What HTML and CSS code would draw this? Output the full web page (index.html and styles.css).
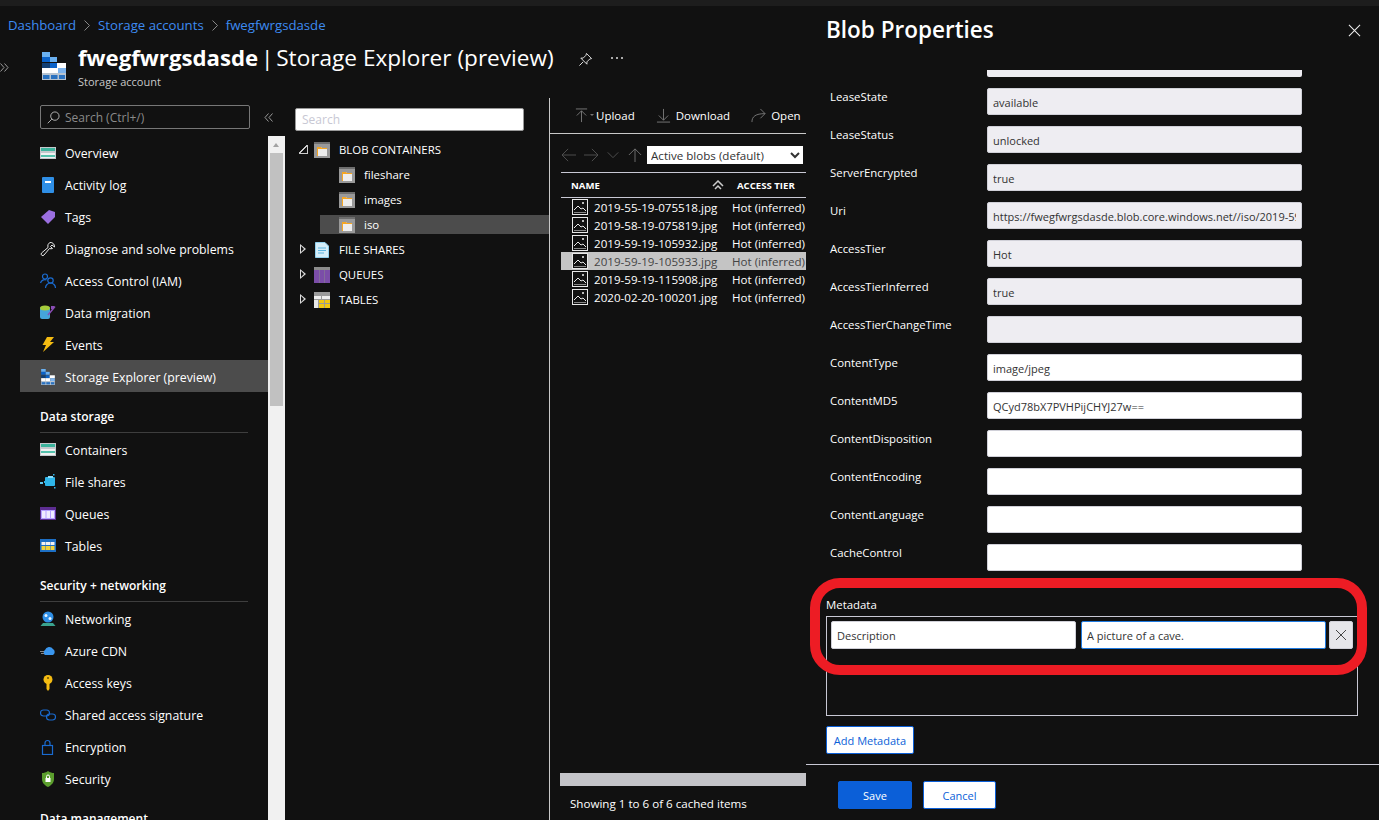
FILE: index.html
```html
<!DOCTYPE HTML>
<html>
<head>
   <meta charset="utf-8">
   <title>Storage Explorer (preview)</title>
   <link rel="stylesheet" href="styles.css">
</head>
<body>

<svg class="defs" width="0" height="0">
   <symbol id="i-logo" viewBox="0 0 24 28">
      <rect x="0" y="0" width="8" height="5" fill="#6ab0f0"/>
      <rect x="0" y="5" width="8" height="5" fill="#0a62c9"/>
      <rect x="8" y="5" width="7" height="5" fill="#6ab0f0"/>
      <rect x="0" y="11" width="8" height="5" fill="#123f73"/>
      <rect x="8" y="11" width="7" height="5" fill="#0a62c9"/>
      <rect x="15" y="11" width="9" height="5" fill="#fff"/>
      <rect x="0" y="16" width="8" height="5" fill="#fff"/>
      <rect x="8" y="16" width="8" height="5" fill="#fff"/>
      <rect x="16" y="16" width="8" height="5" fill="#7db4ee"/>
      <rect x="0" y="21" width="24" height="7" fill="#b8c4d0"/>
      <rect x="1" y="23" width="6.500" height="4" fill="#2a72c0"/>
      <rect x="9" y="23" width="6.500" height="4" fill="#2a72c0"/>
      <rect x="17" y="23" width="6" height="4" fill="#2a72c0"/>
   </symbol>
   <symbol id="i-overview" viewBox="0 0 16 16">
      <rect x="0" y="2" width="16" height="12" fill="#c4c8cc"/>
      <rect x="1" y="3" width="14" height="3" fill="#3bb39c"/>
      <rect x="1" y="8" width="14" height="5" fill="#f0f0f0"/>
      <rect x="1" y="10" width="14" height="2" fill="#54c1ac"/>
   </symbol>
   <symbol id="i-log" viewBox="0 0 16 16">
      <rect x="2" y="0" width="12" height="16" rx="1" fill="#2f8fe6"/>
      <rect x="5" y="4" width="6" height="2" fill="#fff"/>
   </symbol>
   <symbol id="i-tag" viewBox="0 0 16 16">
      <path d="M1 8 L9 1 L15 3 L15 8 L8 15 Z" fill="#9b6fe0"/>
   </symbol>
   <symbol id="i-wrench" viewBox="0 0 16 16">
      <path d="M10 1.500 a4 4 0 0 1 4.500 4.500 L12 4 L10.500 5.500 L12.500 7.500 a4 4 0 0 1 -3 0 L4 14 a1.500 1.500 0 0 1 -2.500 -2 L8 6.500 a4 4 0 0 1 2 -5 Z" fill="none" stroke="#e8e8e8" stroke-width="1"/>
   </symbol>
   <symbol id="i-iam" viewBox="0 0 16 16">
      <circle cx="5" cy="3.500" r="2.500" fill="none" stroke="#1a6bd0" stroke-width="1.200"/>
      <path d="M0.500 10 a4.500 4.500 0 0 1 6 -3" fill="none" stroke="#1a6bd0" stroke-width="1.200"/>
      <circle cx="10.500" cy="7.500" r="2.700" fill="none" stroke="#1a6bd0" stroke-width="1.200"/>
      <path d="M5.500 15 a5 5 0 0 1 10 0" fill="none" stroke="#1a6bd0" stroke-width="1.200"/>
   </symbol>
   <symbol id="i-migration" viewBox="0 0 16 16">
      <rect x="0" y="2" width="10" height="12" rx="2" fill="#45a5dc"/>
      <ellipse cx="5" cy="3" rx="5" ry="2.500" fill="#a5cc3c"/>
      <path d="M8 10 L15 1.500" stroke="#8a4db5" stroke-width="1.500"/>
      <rect x="11" y="1" width="3" height="3" fill="#8a4db5"/>
   </symbol>
   <symbol id="i-events" viewBox="0 0 16 16">
      <path d="M7 0 L14 0 L10 5 L14 5 L3 15 L6 8 L2.500 8 Z" fill="#f5bc12"/>
   </symbol>
   <symbol id="i-containers" viewBox="0 0 16 16">
      <rect x="0" y="1" width="16" height="13" fill="#c4c8cc"/>
      <rect x="1" y="2" width="14" height="3" fill="#3bb39c"/>
      <rect x="1" y="7" width="14" height="6" fill="#f0f0f0"/>
      <rect x="1" y="9" width="14" height="2" fill="#54c1ac"/>
   </symbol>
   <symbol id="i-shares" viewBox="0 0 16 16">
      <rect x="5" y="3" width="10" height="9" rx="1" fill="#2fb6ea"/>
      <rect x="8" y="2" width="5" height="2" fill="#8fdcf8"/>
      <rect x="0" y="8" width="3" height="2" fill="#60c8f0"/>
      <rect x="4" y="7" width="2" height="2" fill="#2fb6ea"/>
      <rect x="13" y="0" width="1.500" height="1.500" fill="#2fb6ea"/>
      <rect x="14" y="13" width="1.500" height="1.500" fill="#2fb6ea"/>
   </symbol>
   <symbol id="i-queues" viewBox="0 0 16 16">
      <rect x="0" y="1" width="16" height="13" fill="#5c2d91"/>
      <rect x="1" y="4" width="14" height="9" fill="#b4a0ff"/>
      <rect x="2" y="5" width="3.500" height="7" fill="#efeaff"/>
      <rect x="6.500" y="5" width="3.500" height="7" fill="#efeaff"/>
      <rect x="11" y="5" width="3" height="7" fill="#efeaff"/>
   </symbol>
   <symbol id="i-tables" viewBox="0 0 16 16">
      <rect x="0" y="1" width="16" height="13" fill="#1d6fc4"/>
      <rect x="1.500" y="4" width="4" height="3" fill="#f2f2f2"/>
      <rect x="6" y="4" width="4" height="3" fill="#f2f2f2"/>
      <rect x="10.500" y="4" width="4" height="3" fill="#f2f2f2"/>
      <rect x="1.500" y="8" width="4" height="4" fill="#f2d33a"/>
      <rect x="6" y="8" width="4" height="4" fill="#f2d33a"/>
      <rect x="10.500" y="8" width="4" height="4" fill="#f2d33a"/>
   </symbol>
   <symbol id="i-network" viewBox="0 0 16 16">
      <circle cx="8" cy="6" r="5.500" fill="#2f8fe6"/>
      <circle cx="6" cy="4.500" r="1.500" fill="#e8f4ff"/>
      <circle cx="10" cy="7.500" r="1.500" fill="#e8f4ff"/>
      <path d="M0.500 15 L3 12 L13 12 L15.500 15 Z" fill="#3aa38e"/>
   </symbol>
   <symbol id="i-cdn" viewBox="0 0 16 16">
      <path d="M5 12 a3 3 0 0 1 0 -5 a4.500 4.500 0 0 1 8 -1 a3.500 3.500 0 0 1 0 6 Z" fill="#3a96ee"/>
      <rect x="0" y="8" width="4" height="1" fill="#888"/>
      <rect x="1" y="10" width="3" height="1" fill="#888"/>
   </symbol>
   <symbol id="i-key" viewBox="0 0 16 16">
      <circle cx="8" cy="4.500" r="4.500" fill="#f5bc12"/>
      <circle cx="8" cy="3" r="1" fill="#6b5208"/>
      <path d="M6.500 8 L9.500 8 L9.500 14 L8 16 L6.500 14 Z" fill="#f5bc12"/>
   </symbol>
   <symbol id="i-sas" viewBox="0 0 16 16">
      <rect x="0.500" y="3" width="9" height="6" rx="3" fill="none" stroke="#1a6bd0" stroke-width="1.100"/>
      <rect x="6.500" y="7" width="9" height="6" rx="3" fill="none" stroke="#1a6bd0" stroke-width="1.100"/>
   </symbol>
   <symbol id="i-lock" viewBox="0 0 16 16">
      <rect x="2.500" y="6.500" width="10" height="9" fill="none" stroke="#1a6bd0" stroke-width="1.200"/>
      <path d="M5 6.500 V4 a2.500 2.500 0 0 1 5 0 V6.500" fill="none" stroke="#1a6bd0" stroke-width="1.200"/>
   </symbol>
   <symbol id="i-shield" viewBox="0 0 16 16">
      <path d="M8 0 C10 1.500 12 2 14 2 V8 C14 12 11 14.500 8 16 C5 14.500 2 12 2 8 V2 C4 2 6 1.500 8 0 Z" fill="#5b9e2d"/>
      <rect x="5.500" y="7" width="5" height="4" fill="#fff"/>
      <path d="M6.500 7 V5.500 a1.500 1.500 0 0 1 3 0 V7" fill="none" stroke="#fff"/>
   </symbol>
   <symbol id="i-folder" viewBox="0 0 16 16">
      <rect x="0" y="0" width="16" height="16" fill="#999"/>
      <rect x="0" y="0" width="16" height="2" fill="#6e6e6e"/>
      <path d="M3 5 H7 L8 6 H13 V14 H3 Z" fill="#ededed"/>
      <path d="M3 5 H7 L8 6 H13 V7 H4 V14 H3 Z" fill="#f5a623"/>
   </symbol>
   <symbol id="i-file" viewBox="0 0 16 16">
      <path d="M1.500 0.500 H11 L14.500 4 V15.500 H1.500 Z" fill="#d4eefa" stroke="#8fd0ee"/>
      <path d="M4 6 H12 M4 8.500 H12 M4 11 H10" stroke="#5bb4e0"/>
   </symbol>
   <symbol id="i-queue" viewBox="0 0 16 16">
      <rect x="0" y="0" width="16" height="16" fill="#8c8c8c"/>
      <rect x="0" y="3" width="5" height="13" fill="#7b4da8"/>
      <rect x="5.500" y="3" width="5" height="13" fill="#7b4da8"/>
      <rect x="11" y="3" width="5" height="13" fill="#7b4da8"/>
   </symbol>
   <symbol id="i-table" viewBox="0 0 16 16">
      <rect x="0" y="0" width="16" height="16" fill="#9a9a9a"/>
      <rect x="0" y="4" width="7" height="3" fill="#eee"/>
      <rect x="8" y="4" width="8" height="3" fill="#eee"/>
      <rect x="0" y="8" width="4" height="8" fill="#e8e8e8"/>
      <rect x="5" y="8" width="5" height="3" fill="#f2c811"/>
      <rect x="11" y="8" width="5" height="3" fill="#f2c811"/>
      <rect x="5" y="12" width="5" height="4" fill="#f2c811"/>
      <rect x="11" y="12" width="5" height="4" fill="#f2c811"/>
   </symbol>
   <symbol id="i-image" viewBox="0 0 16 16">
      <rect x="0.500" y="0.500" width="15" height="15" fill="#111" stroke="#e8e8e8"/>
      <path d="M2 11 L6 7 L9 10 L11 9 L14 12" fill="none" stroke="#e8e8e8"/>
      <path d="M2 13.500 H14" stroke="#888"/>
      <rect x="10" y="3" width="2" height="2" fill="#bbb"/>
   </symbol>
   <symbol id="i-chev" viewBox="0 0 6 11">
      <path d="M0.500 0.500 L5.500 5.500 L0.500 10.500" fill="none" stroke="#888"/>
   </symbol>
</svg>

<div class="topstrip"></div>

<div class="page">

   <div class="blade">
      <div class="crumbs">
         <a>Dashboard</a><svg class="sep"><use href="#i-chev"/></svg><a>Storage accounts</a><svg class="sep"><use href="#i-chev"/></svg><a>fwegfwrgsdasde</a>
      </div>

      <div class="head">
         <div class="expandcol">
            <svg class="expand" viewBox="0 0 9 9"><path d="M0.500 0.500 L4 4.500 L0.500 8.500 M4.500 0.500 L8 4.500 L4.500 8.500" fill="none" stroke="#999"/></svg>
         </div>
         <svg class="logo"><use href="#i-logo"/></svg>
         <div class="headtext">
            <h1><b>fwegfwrgsdasde</b><span class="bar"> | </span>Storage Explorer (preview)</h1>
            <div class="subtitle">Storage account</div>
         </div>
         <svg class="pin" viewBox="0 0 16 16"><path d="M9 1.500 L14.500 7 L12.500 7.500 L9.500 10.500 L9.500 13 L3 6.500 L5.500 6.500 L8.500 3.500 Z M5.500 10.500 L1.500 14.500" fill="none" stroke="#e8e8e8"/></svg>
         <svg class="more" viewBox="0 0 12 2"><rect x="0" y="0" width="2" height="2" fill="#aaa"/><rect x="5" y="0" width="2" height="2" fill="#aaa"/><rect x="10" y="0" width="2" height="2" fill="#aaa"/></svg>
      </div>

      <div class="work">

         <div class="side">
            <div class="sidesearch">
               <div class="searchbox">
                  <svg class="mag" viewBox="0 0 14 14"><circle cx="8.500" cy="5.500" r="4.500" fill="none" stroke="#bbb"/><path d="M5.200 8.800 L0.800 13.200" stroke="#bbb"/></svg>
                  <span>Search (Ctrl+/)</span>
               </div>
               <svg class="collapse" viewBox="0 0 9 9"><path d="M4.500 0.500 L1 4.500 L4.500 8.500 M8.500 0.500 L5 4.500 L8.500 8.500" fill="none" stroke="#999"/></svg>
            </div>
            <div class="sidebody">
               <div class="nav">
                  <div class="item"><svg class="ico"><use href="#i-overview"/></svg>Overview</div>
                  <div class="item"><svg class="ico"><use href="#i-log"/></svg>Activity log</div>
                  <div class="item"><svg class="ico"><use href="#i-tag"/></svg>Tags</div>
                  <div class="item"><svg class="ico"><use href="#i-wrench"/></svg>Diagnose and solve problems</div>
                  <div class="item"><svg class="ico"><use href="#i-iam"/></svg>Access Control (IAM)</div>
                  <div class="item"><svg class="ico"><use href="#i-migration"/></svg>Data migration</div>
                  <div class="item"><svg class="ico"><use href="#i-events"/></svg>Events</div>
                  <div class="item active"><svg class="ico"><use href="#i-logo"/></svg>Storage Explorer (preview)</div>

                  <div class="group">Data storage</div>
                  <div class="item"><svg class="ico"><use href="#i-containers"/></svg>Containers</div>
                  <div class="item"><svg class="ico"><use href="#i-shares"/></svg>File shares</div>
                  <div class="item"><svg class="ico"><use href="#i-queues"/></svg>Queues</div>
                  <div class="item"><svg class="ico"><use href="#i-tables"/></svg>Tables</div>

                  <div class="group">Security + networking</div>
                  <div class="item"><svg class="ico"><use href="#i-network"/></svg>Networking</div>
                  <div class="item"><svg class="ico"><use href="#i-cdn"/></svg>Azure CDN</div>
                  <div class="item"><svg class="ico"><use href="#i-key"/></svg>Access keys</div>
                  <div class="item"><svg class="ico"><use href="#i-sas"/></svg>Shared access signature</div>
                  <div class="item"><svg class="ico"><use href="#i-lock"/></svg>Encryption</div>
                  <div class="item"><svg class="ico"><use href="#i-shield"/></svg>Security</div>

                  <div class="group">Data management</div>
               </div>
               <div class="vscroll">
                  <div class="vbtn"></div>
                  <div class="vthumb"></div>
               </div>
            </div>
         </div>

         <div class="tree">
            <input class="treesearch" type="text" placeholder="Search">
            <div class="node"><span class="tw open"></span><svg class="nico"><use href="#i-folder"/></svg>BLOB CONTAINERS</div>
            <div class="node child"><svg class="nico"><use href="#i-folder"/></svg>fileshare</div>
            <div class="node child"><svg class="nico"><use href="#i-folder"/></svg>images</div>
            <div class="node child sel"><svg class="nico"><use href="#i-folder"/></svg>iso</div>
            <div class="node"><span class="tw"></span><svg class="nico"><use href="#i-file"/></svg>FILE SHARES</div>
            <div class="node"><span class="tw"></span><svg class="nico"><use href="#i-queue"/></svg>QUEUES</div>
            <div class="node"><span class="tw"></span><svg class="nico"><use href="#i-table"/></svg>TABLES</div>
         </div>

         <div class="files">
            <div class="toolbar">
               <span class="tool">
                  <svg class="tico" viewBox="0 0 16 16"><path d="M2 1 H14 M8 15 V3 M3 8 L8 3 L13 8" fill="none" stroke="#777"/></svg>
                  <span class="caret"></span>Upload
               </span>
               <span class="tool">
                  <svg class="tico" viewBox="0 0 16 16"><path d="M1 15 H15 M8 1 V13 M3 8 L8 13 L13 8" fill="none" stroke="#777"/></svg>Download
               </span>
               <span class="tool">
                  <svg class="tico" viewBox="0 0 16 16"><path d="M1 15 C1 9 5 6 15 6 M10 1 L15 6 L10 11" fill="none" stroke="#777"/></svg>Open
               </span>
            </div>
            <div class="navrow">
               <svg class="nav-ico" viewBox="0 0 16 16"><path d="M0 8 H16 M7 1 L0 8 L7 15" fill="none" stroke="#555"/></svg>
               <svg class="nav-ico" viewBox="0 0 16 16"><path d="M0 8 H16 M9 1 L16 8 L9 15" fill="none" stroke="#555"/></svg>
               <svg class="nav-ico" viewBox="0 0 16 16"><path d="M2 5 L8 11 L14 5" fill="none" stroke="#555"/></svg>
               <svg class="nav-ico" viewBox="0 0 16 16"><path d="M8 16 V1 M1 8 L8 1 L15 8" fill="none" stroke="#777"/></svg>
               <select class="blobfilter"><option>Active blobs (default)</option></select>
            </div>
            <div class="thead">
               <span class="colname">NAME</span>
               <svg class="sorti" viewBox="0 0 12 10"><path d="M1 6 L6 1 L11 6 M3 9 L6 6 L9 9" fill="none" stroke="#ccc" stroke-width="1.500"/></svg>
               <span class="coltier">ACCESS TIER</span>
            </div>
            <div class="frow"><svg class="fico"><use href="#i-image"/></svg><span class="fname">2019-55-19-075518.jpg</span><span>Hot (inferred)</span></div>
            <div class="frow"><svg class="fico"><use href="#i-image"/></svg><span class="fname">2019-58-19-075819.jpg</span><span>Hot (inferred)</span></div>
            <div class="frow"><svg class="fico"><use href="#i-image"/></svg><span class="fname">2019-59-19-105932.jpg</span><span>Hot (inferred)</span></div>
            <div class="frow picked"><svg class="fico"><use href="#i-image"/></svg><span class="fname">2019-59-19-105933.jpg</span><span>Hot (inferred)</span></div>
            <div class="frow"><svg class="fico"><use href="#i-image"/></svg><span class="fname">2019-59-19-115908.jpg</span><span>Hot (inferred)</span></div>
            <div class="frow"><svg class="fico"><use href="#i-image"/></svg><span class="fname">2020-02-20-100201.jpg</span><span>Hot (inferred)</span></div>
            <div class="grow"></div>
            <div class="hscroll"></div>
            <div class="status">Showing 1 to 6 of 6 cached items</div>
         </div>

      </div>
   </div>

   <div class="panel">
      <div class="panelhead">
         <h2>Blob Properties</h2>
         <svg class="close" viewBox="0 0 14 14"><path d="M1 1 L13 13 M13 1 L1 13" stroke="#eee" stroke-width="1.100"/></svg>
      </div>

      <div class="form">
         <div class="stub"></div>
         <div class="frm"><label>LeaseState</label><input class="ro" value="available" readonly></div>
         <div class="frm"><label>LeaseStatus</label><input class="ro" value="unlocked" readonly></div>
         <div class="frm"><label>ServerEncrypted</label><input class="ro" value="true" readonly></div>
         <div class="frm"><label>Uri</label><input class="ro" value="https://fwegfwrgsdasde.blob.core.windows.net//iso/2019-59-19-105933.jpg" readonly></div>
         <div class="frm"><label>AccessTier</label><input class="ro" value="Hot" readonly></div>
         <div class="frm"><label>AccessTierInferred</label><input class="ro" value="true" readonly></div>
         <div class="frm"><label>AccessTierChangeTime</label><input class="ro" value="" readonly></div>
         <div class="frm"><label>ContentType</label><input value="image/jpeg"></div>
         <div class="frm"><label>ContentMD5</label><input value="QCyd78bX7PVHPijCHYJ27w=="></div>
         <div class="frm"><label>ContentDisposition</label><input value=""></div>
         <div class="frm"><label>ContentEncoding</label><input value=""></div>
         <div class="frm"><label>ContentLanguage</label><input value=""></div>
         <div class="frm"><label>CacheControl</label><input value=""></div>

         <div class="metalabel">Metadata</div>
         <div class="metabox">
            <input class="metainput" value="Description">
            <input class="metainput focus" value="A picture of a cave.">
            <button class="metax"><svg viewBox="0 0 12 12" width="12" height="12"><path d="M1 1 L11 11 M11 1 L1 11" stroke="#444"/></svg></button>
         </div>
         <button class="btn addmeta">Add Metadata</button>
      </div>

      <div class="panelfoot">
         <button class="btn primary">Save</button>
         <button class="btn">Cancel</button>
      </div>

      <!-- red callout drawn on top of the screenshot -->
      <div class="callout"></div>
   </div>

</div>

</body>
</html>
```

FILE: styles.css
```css
* {
   box-sizing: border-box;
}
html, body {
   margin: 0;
   height: 100%;
   overflow: hidden;
}
body {
   background-color: #111111;
   color: #ffffff;
   font-family: "Open Sans", "Noto Sans", sans-serif;
   font-size: 12px;
}
.defs {
   position: absolute;
}
.topstrip {
   height: 6px;
   background-color: #1d1d1d;
}
.page {
   display: flex;
   height: 814px;
}
.blade {
   width: 806px;
   flex: none;
   display: flex;
   flex-direction: column;
   overflow: hidden;
}

/* breadcrumb and title */
.crumbs {
   height: 38px;
   padding: 11px 0 0 8px;
   color: #3d8bf2;
   font-size: 13.200px;
   line-height: 17px;
   white-space: nowrap;
}
.sep {
   width: 6px;
   height: 11px;
   margin: 0 8px;
   vertical-align: -1px;
}
.head {
   height: 54px;
   display: flex;
}
.expandcol {
   width: 42px;
   flex: none;
   padding-top: 19px;
}
.expand {
   display: block;
   width: 9px;
   height: 9px;
}
.logo {
   width: 24px;
   height: 28px;
   margin: 8px 12px 0 0;
   flex: none;
}
h1 {
   margin: 0;
   font-size: 22.600px;
   font-weight: normal;
   line-height: 28px;
   white-space: nowrap;
}
h1 b {
   font-size: 22.200px;
}
.bar {
   word-spacing: -3px;
}
.subtitle {
   color: #c8c8c8;
   font-size: 11px;
   line-height: 16px;
   margin-top: 2px;
}
.pin {
   width: 15px;
   height: 15px;
   margin: 8px 0 0 24px;
   flex: none;
}
.more {
   width: 12px;
   height: 2px;
   margin: 13px 0 0 18px;
   flex: none;
}

.work {
   flex: 1;
   display: flex;
   min-height: 0;
}

/* resource menu */
.side {
   width: 285px;
   flex: none;
   display: flex;
   flex-direction: column;
}
.sidesearch {
   height: 38px;
   flex: none;
   padding: 7px 0 0 40px;
   display: flex;
}
.searchbox {
   width: 210px;
   height: 24px;
   border: 1px solid #777777;
   border-radius: 2px;
   display: flex;
   align-items: center;
   padding-left: 6px;
   color: #8a8a8a;
}
.mag {
   width: 13px;
   height: 13px;
   margin-right: 5px;
}
.collapse {
   width: 9px;
   height: 9px;
   margin: 8px 0 0 14px;
}
.sidebody {
   flex: 1;
   display: flex;
   min-height: 0;
}
.nav {
   width: 248px;
   margin-left: 20px;
   padding-top: 1px;
   overflow: hidden;
   font-size: 12.300px;
}
.item {
   height: 32px;
   padding-left: 20px;
   display: flex;
   align-items: center;
   white-space: nowrap;
}
.item.active {
   background-color: #4c4c4c;
   margin: -1px 0 1px 0;
   padding-top: 2px;
}
.ico {
   width: 16px;
   height: 16px;
   margin-right: 9px;
   flex: none;
}
.group {
   height: 40px;
   margin: 0 20px 1px 20px;
   padding-top: 15px;
   line-height: 18px;
   font-size: 12px;
   font-weight: 600;
   border-bottom: 1px solid #3e3e3e;
}
.vscroll {
   width: 17px;
   flex: none;
   background-color: #f1f1f1;
}
.vbtn {
   height: 17px;
   position: relative;
}
.vbtn:after {
   content: "";
   position: absolute;
   left: 5px;
   top: 7px;
   border-left: 3.500px solid transparent;
   border-right: 3.500px solid transparent;
   border-bottom: 4px solid #a3a3a3;
}
.vthumb {
   height: 253px;
   margin: 0 2px;
   background-color: #c1c1c1;
}

/* container tree */
.tree {
   width: 265px;
   flex: none;
   padding-top: 10px;
   border-right: 1px solid #c8c8c8;
}
.treesearch {
   display: block;
   width: 229px;
   height: 23px;
   margin: 0 0 6px 10px;
   padding: 0 6px;
   border: 1px solid #999999;
   background-color: #ffffff;
   font: 12px "Open Sans", sans-serif;
}
.treesearch::placeholder {
   color: #c8c8d4;
}
.node {
   height: 25px;
   padding-left: 29px;
   display: flex;
   align-items: center;
   position: relative;
   white-space: nowrap;
   font-size: 11.400px;
}
.node.child {
   padding-left: 54px;
}
.node.sel {
   z-index: 0;
}
.node.sel:before {
   content: "";
   position: absolute;
   z-index: -1;
   left: 35px;
   right: 0;
   top: 3px;
   bottom: 3px;
   background-color: #4c4c4c;
}
.nico {
   width: 16px;
   height: 16px;
   margin-right: 9px;
   flex: none;
}
.tw {
   position: absolute;
   left: 15px;
   top: 7px;
   border-left: 6px solid #dddddd;
   border-top: 5px solid transparent;
   border-bottom: 5px solid transparent;
}
.tw:after {
   content: "";
   position: absolute;
   left: -5px;
   top: -3px;
   border-left: 3px solid #111111;
   border-top: 3px solid transparent;
   border-bottom: 3px solid transparent;
}
.tw.open {
   left: 14px;
   top: 8px;
   border: none;
   width: 9px;
   height: 9px;
   background: linear-gradient(135deg, transparent 49%, #cccccc 50%, #cccccc 58%, #111111 59%);
   border-right: 1px solid #cccccc;
   border-bottom: 1px solid #cccccc;
}
.tw.open:after {
   display: none;
}

/* file list */
.files {
   flex: 1;
   min-width: 0;
   display: flex;
   flex-direction: column;
   white-space: nowrap;
   font-size: 11.600px;
}
.toolbar {
   height: 36px;
   flex: none;
   border-bottom: 1px solid #c8c8c8;
   display: flex;
   align-items: center;
   padding: 0 0 1px 24px;
   overflow: hidden;
   font-size: 11.500px;
}
.tool {
   display: flex;
   align-items: center;
   margin-right: 21px;
   flex: none;
}
.tico {
   width: 15px;
   height: 15px;
   margin-right: 5px;
}
.caret {
   border-left: 2px solid transparent;
   border-right: 2px solid transparent;
   border-top: 2px solid #777777;
   margin: 0 2px 0 -4px;
}
.navrow {
   height: 39px;
   flex: none;
   margin-left: 11px;
   border-bottom: 1px solid #c8c8d4;
   display: flex;
   align-items: center;
   padding-top: 3px;
}
.nav-ico {
   width: 14px;
   height: 14px;
   margin: 0 7px 0 1px;
   flex: none;
}
.blobfilter {
   width: 156px;
   height: 18px;
   margin-left: -2px;
   padding-top: 1px;
   border: none;
   background-color: #ffffff;
   color: #333333;
   font: 11.600px "Open Sans", sans-serif;
}
.thead {
   height: 25px;
   flex: none;
   margin-left: 11px;
   border-bottom: 1px solid #c8c8d4;
   display: flex;
   align-items: center;
   padding-left: 10px;
   font-size: 9.600px;
   font-weight: 700;
}
.colname {
   width: 141px;
}
.sorti {
   width: 12px;
   height: 10px;
   margin-right: 13px;
}
.frow {
   height: 18px;
   flex: none;
   margin-left: 11px;
   display: flex;
   align-items: center;
   padding-left: 11px;
}
.frow.picked {
   background-color: #c4c4c4;
   color: #444444;
}
.fico {
   width: 16px;
   height: 16px;
   margin-right: 6px;
   flex: none;
}
.fname {
   width: 138px;
   flex: none;
}
.grow {
   flex: 1;
}
.hscroll {
   height: 13px;
   flex: none;
   margin-left: 10px;
   background-color: #c4c4c8;
}
.status {
   height: 34px;
   flex: none;
   padding: 9px 0 0 20px;
   line-height: 18px;
}

/* properties panel */
.panel {
   flex: 1;
   position: relative;
   display: flex;
   flex-direction: column;
   min-width: 0;
}
.panelhead {
   height: 64px;
   flex: none;
   display: flex;
   justify-content: space-between;
   padding: 8px 18px 0 20px;
}
h2 {
   margin: 0;
   font-size: 22.500px;
   font-weight: 600;
   line-height: 32px;
}
.close {
   width: 13px;
   height: 13px;
   margin-top: 10px;
}
.form {
   flex: 1;
   min-height: 0;
   padding: 0 0 0 20px;
}
.stub {
   width: 315px;
   height: 7px;
   margin: 0 0 11px 161px;
   background-color: #eeedf2;
   border-radius: 0 0 2px 2px;
}
.frm {
   height: 27px;
   margin-bottom: 11px;
   display: flex;
}
.frm label {
   width: 161px;
   flex: none;
   padding-left: 4px;
   line-height: 18px;
   font-size: 11.400px;
}
.frm input {
   width: 315px;
   flex: none;
}
input {
   height: 27px;
   padding: 1px 5px 0 5px;
   border: 1px solid #d0d0d8;
   border-radius: 2px;
   background-color: #ffffff;
   color: #333333;
   font: 11px "Open Sans", sans-serif;
   outline: none;
}
input.ro {
   background-color: #eeedf2;
}
.metalabel {
   margin-top: 28px;
   height: 17px;
   line-height: 12px;
   font-size: 11.400px;
}
.metabox {
   width: 532px;
   height: 100px;
   border: 1px solid #c8c8d4;
   padding: 4px;
   display: flex;
   gap: 5px;
   align-items: flex-start;
}
.metainput {
   width: 245px;
   height: 28px;
   flex: none;
}
.metainput.focus {
   border-color: #1f7ae0;
}
.metax {
   width: 24px;
   height: 28px;
   margin-left: -2px;
   flex: none;
   padding: 0;
   border: 1px solid #d0d0d8;
   border-radius: 2px;
   background-color: #e6e6ea;
   display: flex;
   align-items: center;
   justify-content: center;
}
.btn {
   height: 28px;
   border: 1px solid #0b5fd8;
   border-radius: 2px;
   background-color: #ffffff;
   color: #0b5fd8;
   font: 11px "Open Sans", sans-serif;
   padding: 0;
   width: 73px;
}
.btn.primary {
   background-color: #0b5fd8;
   color: #ffffff;
   width: 74px;
}
.addmeta {
   width: 88px;
   margin-top: 10px;
   display: block;
}
.panelfoot {
   height: 56px;
   flex: none;
   border-top: 1px solid #c8c8d4;
   padding: 16px 0 0 32px;
   display: flex;
   gap: 11px;
   align-items: flex-start;
}
.callout {
   position: absolute;
   left: 4px;
   top: 572px;
   width: 557px;
   height: 97px;
   border: 10px solid #ed1c24;
   border-radius: 30px;
}
```
